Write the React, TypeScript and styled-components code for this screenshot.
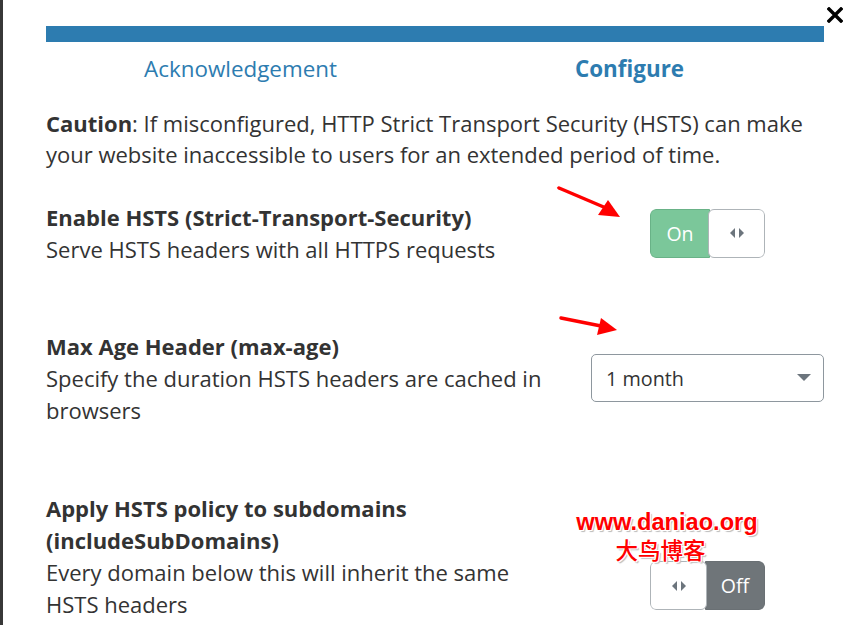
import React from "react";
import styled, { createGlobalStyle } from "styled-components";

const Global = createGlobalStyle`
  html, body { margin: 0; padding: 0; background: #fff; }
  body { font-family: "Open Sans", "Noto Sans", sans-serif; color: #333; }
`;

const Page = styled.div`
  position: relative;
  width: 864px;
  height: 625px;
  overflow: hidden;
  box-sizing: border-box;
  border-left: 3px solid #383838;
  background: #fff;
`;

const Content = styled.div`
  width: 778px;
  margin-left: 43px;
  padding-top: 26px;
  display: flex;
  flex-direction: column;
`;

const Close = styled.button`
  position: absolute;
  top: 6px;
  right: 20px;
  width: 18px;
  height: 18px;
  padding: 0;
  border: 0;
  background: none;
  display: flex;
  align-items: center;
  justify-content: center;
`;

const ProgressBar = styled.div`
  height: 16px;
  background: #2d7cb0;
`;

const Tabs = styled.div`
  display: grid;
  grid-template-columns: 1fr 1fr;
  padding-top: 12px;
`;

const Tab = styled.div<{ $active?: boolean }>`
  text-align: center;
  font-size: 22.4px;
  line-height: 30px;
  color: #2d7cb0;
  font-weight: ${(p) => (p.$active ? 700 : 400)};
`;

const Caution = styled.p`
  margin: 24px 0 0;
  font-size: 22px;
  line-height: 31px;
  color: #333;
`;

const Strong = styled.strong`
  font-weight: 700;
`;

const Row = styled.div<{ $gap: number }>`
  display: grid;
  grid-template-columns: 515px 1fr;
  column-gap: 30px;
  align-items: center;
  margin-top: ${(p) => p.$gap}px;
`;

const Text = styled.div`
  font-size: 22px;
  line-height: 32px;
  color: #333;
`;

const Title = styled.div`
  font-weight: 700;
`;

const Control = styled.div<{ $end?: boolean }>`
  display: flex;
  justify-content: center;
  align-self: ${(p) => (p.$end ? "end" : "center")};
  margin-bottom: ${(p) => (p.$end ? "10px" : "0")};
`;

const Toggle = styled.div`
  display: flex;
  width: 115px;
  height: 49px;
  box-sizing: border-box;
  border-radius: 6px;
  overflow: hidden;
`;

const ToggleLabel = styled.div<{ $on?: boolean }>`
  width: 58px;
  display: flex;
  align-items: center;
  justify-content: center;
  font-size: 19.5px;
  color: #fff;
  background: ${(p) => (p.$on ? "#7bc79a" : "#6f7579")};
  border: 1px solid ${(p) => (p.$on ? "#69b287" : "#6a7074")};
  border-radius: ${(p) => (p.$on ? "6px 0 0 6px" : "0 6px 6px 0")};
`;

const Handle = styled.div<{ $side: "left" | "right" }>`
  flex: 1;
  display: flex;
  align-items: center;
  justify-content: center;
  background: #fff;
  border: 1px solid #aeb4b8;
  border-radius: 6px;
  margin-${(p) => (p.$side === "left" ? "right" : "left")}: -2px;
  position: relative;
`;

const Select = styled.div`
  width: 233px;
  height: 48px;
  box-sizing: border-box;
  border: 1px solid #8e979e;
  border-radius: 5px;
  display: flex;
  align-items: center;
  justify-content: space-between;
  padding: 0 12px 0 14px;
  font-size: 19.8px;
  color: #333;
`;

const Arrow = styled.svg`
  position: absolute;
  pointer-events: none;
`;

const Watermark = styled.div`
  position: absolute;
  left: 568px;
  top: 509px;
  display: flex;
  flex-direction: column;
  align-items: center;
  width: 192px;
  color: #ff0000;
  text-shadow: -1px -1px 0 #fff, 1px -1px 0 #fff, -1px 1px 0 #fff, 1px 1px 0 #fff, 2px 2px 1px #bbb;
`;

const WmUrl = styled.div`
  font-family: "Liberation Sans", Arial, sans-serif;
  font-weight: 700;
  font-size: 23.6px;
  line-height: 27px;
`;

const WmName = styled.div`
  font-family: "Noto Sans CJK SC", sans-serif;
  font-size: 22.5px;
  line-height: 26px;
  font-weight: 500;
  margin-right: 13px;
`;

const Carets = () => (
  <svg width="18" height="12" viewBox="0 0 18 12">
    <path d="M7 1 L2 6 L7 11 Z" fill="#6c757d" />
    <path d="M11 1 L16 6 L11 11 Z" fill="#6c757d" />
  </svg>
);

export default function App() {
  return (
    <>
      <Global />
      <Page>
        <Close aria-label="close">
          <svg width="16" height="16" viewBox="0 0 16 16">
            <path d="M2 2 L14 14 M14 2 L2 14" stroke="#000" strokeWidth="3.4" strokeLinecap="square" />
          </svg>
        </Close>
        <Content>
          <ProgressBar />
          <Tabs>
            <Tab>Acknowledgement</Tab>
            <Tab $active>Configure</Tab>
          </Tabs>
          <Caution>
            <Strong>Caution</Strong>: If misconfigured, HTTP Strict Transport Security (HSTS) can make your
            website inaccessible to users for an extended period of time.
          </Caution>

          <Row $gap={31}>
            <Text>
              <Title>Enable HSTS (Strict-Transport-Security)</Title>
              Serve HSTS headers with all HTTPS requests
            </Text>
            <Control>
              <Toggle>
                <ToggleLabel $on>On</ToggleLabel>
                <Handle $side="right">
                  <Carets />
                </Handle>
              </Toggle>
            </Control>
          </Row>

          <Row $gap={65}>
            <Text>
              <Title>Max Age Header (max-age)</Title>
              Specify the duration HSTS headers are cached in browsers
            </Text>
            <Control>
              <Select>
                <span>1 month</span>
                <svg width="14" height="8" viewBox="0 0 14 8">
                  <path d="M0 0 L14 0 L7 7 Z" fill="#6c757d" />
                </svg>
              </Select>
            </Control>
          </Row>

          <Row $gap={66}>
            <Text>
              <Title>Apply HSTS policy to subdomains (includeSubDomains)</Title>
              Every domain below this will inherit the same HSTS headers
            </Text>
            <Control $end>
              <Toggle>
                <Handle $side="left">
                  <Carets />
                </Handle>
                <ToggleLabel>Off</ToggleLabel>
              </Toggle>
            </Control>
          </Row>
        </Content>

        <Arrow style={{ left: 553, top: 184 }} width="70" height="40" viewBox="0 0 70 40">
          <path d="M3 4 L50 24" stroke="#ff0000" strokeWidth="3.5" strokeLinecap="round" />
          <path d="M64 33 L42 31 L52 16 Z" fill="#ff0000" />
        </Arrow>
        <Arrow style={{ left: 554, top: 313 }} width="66" height="24" viewBox="0 0 66 24">
          <path d="M4 5 L44 13" stroke="#ff0000" strokeWidth="3.5" strokeLinecap="round" />
          <path d="M60 17 L40 22 L44 5 Z" fill="#ff0000" />
        </Arrow>

        <Watermark>
          <WmUrl>www.daniao.org</WmUrl>
          <WmName>大鸟博客</WmName>
        </Watermark>
      </Page>
    </>
  );
}
